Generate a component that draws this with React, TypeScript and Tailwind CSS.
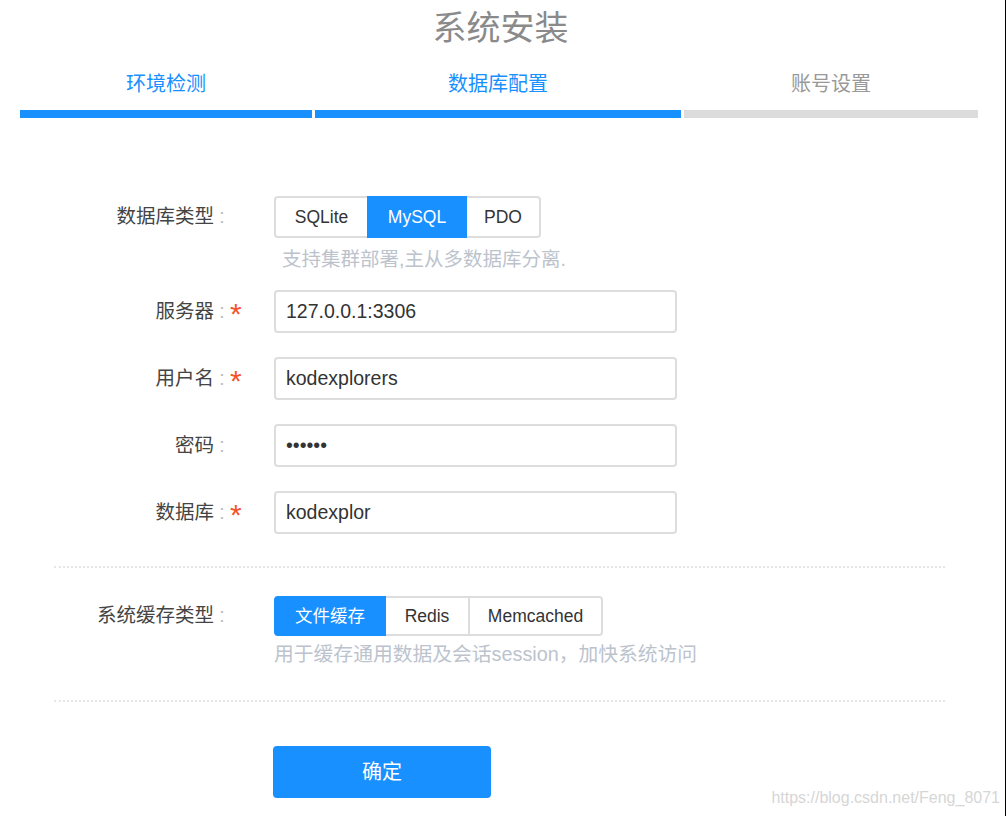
import React from "react";

const FONT = '"Liberation Sans", "Noto Sans CJK SC", sans-serif';

function Label({ text, required }: { text: string; required?: boolean }) {
  return (
    <div className="flex w-[244px] shrink-0 items-center justify-end text-[19.5px] text-[#444]">
      <span>{text}</span>
      <span className="w-[16px] text-center text-[#bbbbbb]">:</span>
      <span className="relative h-[20px] w-[14px]">
        {required ? (
          <span className="absolute left-[0px] top-[-3px] text-[30px] leading-[30px] text-[#f5532d]">
            *
          </span>
        ) : null}
      </span>
    </div>
  );
}

function Seg({
  items,
  active,
  widths,
  height,
}: {
  items: string[];
  active: number;
  widths: string[];
  height: string;
}) {
  return (
    <div className={`flex ${height}`}>
      {items.map((it, i) => {
        const isActive = i === active;
        const first = i === 0;
        const last = i === items.length - 1;
        return (
          <div
            key={it}
            className={[
              "relative flex items-center justify-center border-2 text-[17.5px]",
              widths[i],
              first ? "rounded-l-[4px]" : "-ml-[2px]",
              last ? "rounded-r-[4px]" : "",
              isActive
                ? "z-10 border-[#1890ff] bg-[#1890ff] text-white"
                : "border-[#dddddd] bg-white text-[#333]",
            ].join(" ")}
          >
            {it}
          </div>
        );
      })}
    </div>
  );
}

function InputRow({
  label,
  value,
  required,
}: {
  label: string;
  value: string;
  required?: boolean;
}) {
  return (
    <div className="flex items-center">
      <Label text={label} required={required} />
      <input
        defaultValue={value}
        readOnly
        className="ml-[30px] h-[43px] w-[403px] rounded-[4px] border-2 border-[#dddddd] bg-white px-[10px] text-[19.5px] text-[#333] outline-none"
        style={{ fontFamily: FONT }}
      />
    </div>
  );
}

export default function App() {
  return (
    <div
      className="relative h-[816px] w-[1006px] overflow-hidden border-r border-black bg-white"
      style={{ fontFamily: FONT }}
    >
      {/* Title */}
      <div className="pt-[6px] pr-[4px] text-center text-[34px] leading-[44px] text-[#8a8a8a]">
        系统安装
      </div>

      {/* Steps */}
      <div className="mt-[20px] ml-[20px] flex gap-[3px]">
        <div className="flex w-[292px] flex-col items-center">
          <div className="text-[20px] leading-[28px] text-[#1890ff]">环境检测</div>
          <div className="mt-[12px] h-[8px] w-full bg-[#1890ff]" />
        </div>
        <div className="flex w-[366px] flex-col items-center">
          <div className="text-[20px] leading-[28px] text-[#1890ff]">数据库配置</div>
          <div className="mt-[12px] h-[8px] w-full bg-[#1890ff]" />
        </div>
        <div className="flex w-[294px] flex-col items-center">
          <div className="text-[20px] leading-[28px] text-[#999999]">账号设置</div>
          <div className="mt-[12px] h-[8px] w-full bg-[#dcdcdc]" />
        </div>
      </div>

      {/* DB type */}
      <div className="mt-[78px] flex items-center">
        <Label text="数据库类型" />
        <div className="ml-[30px]">
          <Seg
            items={["SQLite", "MySQL", "PDO"]}
            active={1}
            widths={["w-[95px]", "w-[100px]", "w-[76px]"]}
            height="h-[42px]"
          />
        </div>
      </div>
      <div className="mt-[10px] ml-[282px] text-[19.5px] leading-[22px] text-[#bcc3cd]">
        支持集群部署,主从多数据库分离.
      </div>

      <div className="mt-[20px] flex flex-col gap-[24px]">
        <InputRow label="服务器" value="127.0.0.1:3306" required />
        <InputRow label="用户名" value="kodexplorers" required />
        <InputRow label="密码" value="••••••" />
        <InputRow label="数据库" value="kodexplor" required />
      </div>

      <div className="mt-[32px] ml-[54px] w-[891px] border-t-2 border-dotted border-[#e6e6e6]" />

      {/* Cache type */}
      <div className="mt-[28px] flex items-center">
        <Label text="系统缓存类型" />
        <div className="ml-[30px]">
          <Seg
            items={["文件缓存", "Redis", "Memcached"]}
            active={0}
            widths={["w-[112px]", "w-[86px]", "w-[135px]"]}
            height="h-[40px]"
          />
        </div>
      </div>
      <div className="mt-[7px] ml-[274px] text-[19.8px] leading-[22px] text-[#bcc3cd]">
        用于缓存通用数据及会话session，加快系统访问
      </div>

      <div className="mt-[35px] ml-[54px] w-[891px] border-t-2 border-dotted border-[#e6e6e6]" />

      <div className="mt-[44px] ml-[273px]">
        <button
          className="flex h-[52px] w-[218px] items-center justify-center rounded-[4px] bg-[#1890ff] text-[20px] text-white"
          style={{ fontFamily: FONT }}
        >
          确定
        </button>
      </div>

      <div className="absolute right-[5px] bottom-[9px] text-[16px] leading-[18px] text-[#d6d6d6]">
        https://blog.csdn.net/Feng_8071
      </div>
    </div>
  );
}
